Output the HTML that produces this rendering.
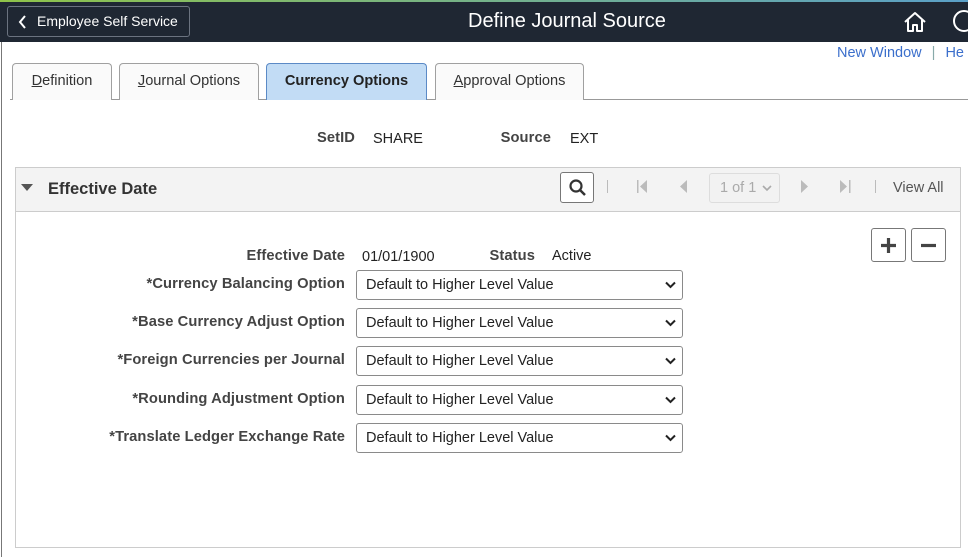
<!DOCTYPE html>
<html><head><style>
body{margin:0;width:968px;height:557px;overflow:hidden;background:#fff;font-family:"Liberation Sans",Arial,sans-serif;position:relative}
.a{position:absolute}
.hdr{left:0;top:0;width:968px;height:42px;background:#1f2733}
.strip{left:0;top:0;width:968px;height:2px;background:linear-gradient(90deg,#8fc34a,#5aa0c8)}
.back{left:7px;top:6px;width:183px;height:31px;border:1px solid #6b7380;border-radius:3px;box-sizing:border-box;color:#fff;font-size:14px;line-height:29px}
.tab{top:63px;height:37px;border:1px solid #a0a0a0;border-bottom:none;border-radius:4px 4px 0 0;box-sizing:border-box;background:#fafafa;font-size:14.6px;color:#333;text-align:center;line-height:35px}
.lbl{font-size:14.7px;font-weight:bold;color:#444;text-align:right;letter-spacing:0.1px}
.val{font-size:14.5px;color:#222}
.sel{left:356px;width:327px;height:30px;border:1px solid #8a8a8a;border-radius:3px;box-sizing:border-box;font-size:14.5px;color:#222;line-height:28px;padding-left:9px}
.sel svg{position:absolute;right:6px;top:10px}
</style></head><body>
<div class="a" style="left:1px;top:42px;width:1px;height:515px;background:#777"></div>
<div class="a hdr"></div><div class="a strip"></div>
<div class="a back"><svg class="a" style="left:10px;top:8px" width="10" height="14" viewBox="0 0 10 14"><path d="M7 1L2 7l5 6" stroke="#fff" stroke-width="2" fill="none"/></svg><span class="a" style="left:29px">Employee Self Service</span></div>
<div class="a" style="left:468px;top:10px;color:#fff;font-size:20px">Define Journal Source</div>
<svg class="a" style="left:903px;top:11px" width="24" height="22" viewBox="0 0 24 22"><path d="M2 11L12 2l10 9M5 9v11h5v-6h4v6h5V9" stroke="#fff" stroke-width="2" fill="none" stroke-linejoin="round"/></svg>
<div class="a" style="left:953px;top:10px;width:18px;height:18px;border:2.5px solid #fff;border-radius:50%"></div>
<div class="a" style="left:837px;top:45px;font-size:14.5px;color:#3b6fcc">New Window <span style="color:#8aa;margin:0 6px">|</span> He</div>
<div class="a" style="left:10px;top:99px;width:958px;height:1px;background:#999"></div>
<div class="a tab" style="left:12px;width:100px"><u>D</u>efinition</div>
<div class="a tab" style="left:119px;width:140px"><u>J</u>ournal Options</div>
<div class="a tab" style="left:266px;width:161px;background:#c2dcf5;border-color:#5b8ac6;font-weight:bold;color:#222">Currency Options</div>
<div class="a tab" style="left:435px;width:149px"><u>A</u>pproval Options</div>
<div class="a lbl" style="left:300px;width:55px;top:130px">SetID</div>
<div class="a val" style="left:373px;top:131px">SHARE</div>
<div class="a lbl" style="left:480px;width:71px;top:130px">Source</div>
<div class="a val" style="left:570px;top:131px">EXT</div>
<div class="a" style="left:15px;top:167px;width:946px;height:381px;border:1px solid #ccc;box-sizing:border-box"></div>
<div class="a" style="left:16px;top:168px;width:944px;height:43px;background:#f3f3f3;border-bottom:1px solid #ccc"></div>
<svg class="a" style="left:21px;top:184px" width="12" height="8"><path d="M0 0h12L6 7z" fill="#555"/></svg>
<div class="a" style="left:48px;top:180px;font-size:16.5px;font-weight:bold;color:#333">Effective Date</div>
<div class="a" style="left:560px;top:172px;width:34px;height:31px;border:1px solid #777;border-radius:3px;box-sizing:border-box;background:#fff"><svg class="a" style="left:8px;top:6px" width="17" height="17"><circle cx="7" cy="7" r="5.5" stroke="#333" stroke-width="2.2" fill="none"/><path d="M11 11l5 5" stroke="#333" stroke-width="2.5"/></svg></div>
<div class="a" style="left:607px;top:180px;width:1px;height:13px;background:#bbb"></div>
<svg class="a" style="left:637px;top:180px" width="12" height="14"><rect x="0" y="0" width="1.5" height="13" fill="#bbb"/><path d="M10 0v13L3 6.5z" fill="#bbb"/></svg>
<svg class="a" style="left:679px;top:180px" width="10" height="14"><path d="M8 0v13L1 6.5z" fill="#bbb"/></svg>
<div class="a" style="left:709px;top:173px;width:71px;height:30px;border:1px solid #ddd;border-radius:3px;box-sizing:border-box;background:#f2f2f2;font-size:14.5px;color:#aaa;line-height:28px;padding-left:10px">1 of 1 <svg width="10" height="8" style="margin-left:2px"><path d="M1 2l4 4 4-4" stroke="#aaa" stroke-width="1.6" fill="none"/></svg></div>
<svg class="a" style="left:800px;top:180px" width="10" height="14"><path d="M1 0v13l7-6.5z" fill="#bbb"/></svg>
<svg class="a" style="left:840px;top:180px" width="12" height="14"><path d="M0 0v13l7-6.5z" fill="#bbb"/><rect x="9" y="0" width="1.5" height="13" fill="#bbb"/></svg>
<div class="a" style="left:875px;top:180px;width:1px;height:13px;background:#bbb"></div>
<div class="a" style="left:893px;top:180px;font-size:14.5px;color:#555">View All</div>
<div class="a" style="left:871px;top:228px;width:35px;height:34px;border:1px solid #777;border-radius:3px;box-sizing:border-box"><svg class="a" style="left:8px;top:8px" width="17" height="17"><path d="M8.5 1v15M1 8.5h15" stroke="#444" stroke-width="3.2"/></svg></div>
<div class="a" style="left:911px;top:228px;width:35px;height:34px;border:1px solid #777;border-radius:3px;box-sizing:border-box"><svg class="a" style="left:8px;top:8px" width="17" height="17"><path d="M1 8.5h15" stroke="#444" stroke-width="3.2"/></svg></div>
<div class="a lbl" style="left:100px;width:245px;top:248px">Effective Date</div>
<div class="a val" style="left:362px;top:249px">01/01/1900</div>
<div class="a lbl" style="left:480px;width:55px;top:248px">Status</div>
<div class="a val" style="left:552px;top:248px">Active</div>
<div class="a lbl" style="left:50px;width:295px;top:276px">*Currency Balancing Option</div>
<div class="a lbl" style="left:50px;width:295px;top:314px">*Base Currency Adjust Option</div>
<div class="a lbl" style="left:50px;width:295px;top:352px">*Foreign Currencies per Journal</div>
<div class="a lbl" style="left:50px;width:295px;top:391px">*Rounding Adjustment Option</div>
<div class="a lbl" style="left:50px;width:295px;top:429px">*Translate Ledger Exchange Rate</div>
<div class="a sel" style="top:270px">Default to Higher Level Value<svg width="11" height="8"><path d="M1 1.5l4.5 4.5 4.5-4.5" stroke="#222" stroke-width="2" fill="none"/></svg></div>
<div class="a sel" style="top:308px">Default to Higher Level Value<svg width="11" height="8"><path d="M1 1.5l4.5 4.5 4.5-4.5" stroke="#222" stroke-width="2" fill="none"/></svg></div>
<div class="a sel" style="top:346px">Default to Higher Level Value<svg width="11" height="8"><path d="M1 1.5l4.5 4.5 4.5-4.5" stroke="#222" stroke-width="2" fill="none"/></svg></div>
<div class="a sel" style="top:385px">Default to Higher Level Value<svg width="11" height="8"><path d="M1 1.5l4.5 4.5 4.5-4.5" stroke="#222" stroke-width="2" fill="none"/></svg></div>
<div class="a sel" style="top:423px">Default to Higher Level Value<svg width="11" height="8"><path d="M1 1.5l4.5 4.5 4.5-4.5" stroke="#222" stroke-width="2" fill="none"/></svg></div>
</body></html>
